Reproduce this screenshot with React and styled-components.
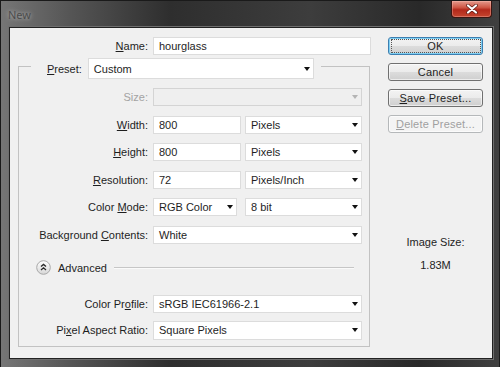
import React from "react";
import styled, {createGlobalStyle} from "styled-components";

const GlobalStyle = createGlobalStyle`
 html, body {
  margin: 0;
  padding: 0;
  background: #1c1c1c;
 }
 body {
  font-family: "Liberation Sans", Arial, sans-serif;
  font-size: 11px;
  color: #1e1e1e;
 }
`;

const Frame = styled.div`
 width: 500px;
 height: 367px;
 box-sizing: border-box;
 display: flex;
 flex-direction: column;
 padding: 0 6px 0 8px;
 border: 1px solid #1a1a1a;
 border-bottom: none;
 background: linear-gradient(
  to right,
  #767676 0%,
  #555 14%,
  #2e2e2e 34%,
  #3d3d3d 62%,
  #292929 84%,
  #404040 100%
 );
 overflow: hidden;
`;

const TitleBar = styled.div`
 height: 26px;
 display: flex;
 justify-content: space-between;
 align-items: flex-start;
 margin-left: -1px;
`;

const Title = styled.span`
 margin-top: 6px;
 font-family: "Noto Sans", "Liberation Sans", sans-serif;
 font-size: 11px;
 color: #4c4c4c;
 text-shadow: 0 0 4px rgba(230, 230, 230, 0.7);
`;

const CloseButton = styled.div`
 width: 41px;
 height: 17px;
 margin-right: 1px;
 box-sizing: border-box;
 display: flex;
 align-items: center;
 justify-content: center;
 border: 1px solid #3b1511;
 border-top: none;
 border-radius: 0 0 4px 4px;
 background: linear-gradient(#e59a8c 0%, #cf5846 40%, #b3291b 55%, #c4452f 100%);
 box-shadow: inset 0 0 0 1px rgba(255, 200, 190, 0.35);
`;

const Client = styled.div`
 flex: 1;
 display: flex;
 margin-bottom: 8px;
 padding: 9px 9px 0 8px;
 background: #f0f0f0;
 border: 1px solid #222;
 box-shadow: 0 0 0 1px #6e6e6e;
`;

const FormColumn = styled.div`
 width: 352px;
 display: flex;
 flex-direction: column;
`;

const Row = styled.div`
 display: grid;
 grid-template-columns: ${({labelWidth}) => labelWidth}px auto;
 column-gap: 5px;
 align-items: center;
`;

const Label = styled.span`
 text-align: right;
 white-space: nowrap;
 color: ${({disabled}) => (disabled ? "#a3a3a3" : "#1e1e1e")};
`;

const Controls = styled.div`
 display: flex;
 gap: ${({gap}) => gap || 4}px;
`;

const TextBox = styled.div`
 width: ${({w}) => w}px;
 height: ${({h}) => h || 18}px;
 box-sizing: border-box;
 display: flex;
 align-items: center;
 padding: 0 3px 0 5px;
 background: ${({disabled}) => (disabled ? "#efefef" : "#fff")};
 border: 1px solid ${({disabled}) => (disabled ? "#d4d4d4" : "#dcdcdc")};
 white-space: nowrap;
`;

const Arrow = styled.span`
 margin-left: auto;
 width: 0;
 height: 0;
 border-left: 3.5px solid transparent;
 border-right: 3.5px solid transparent;
 border-top: 4px solid ${({disabled}) => (disabled ? "#b4b4b4" : "#111")};
`;

const GroupBox = styled.div`
 margin-top: 11px;
 padding-bottom: 6px;
 border: 1px solid #c2c2c2;
`;

const GroupHeader = styled.div`
 width: fit-content;
 display: flex;
 align-items: center;
 gap: 6px;
 margin: -9px 0 0 12px;
 padding: 0 7px 0 16px;
 background: #f0f0f0;
`;

const FieldList = styled.div`
 display: flex;
 flex-direction: column;
 gap: ${({gap}) => gap}px;
 margin-top: ${({top}) => top}px;
`;

const AdvancedRow = styled.div`
 height: 16px;
 display: flex;
 align-items: center;
 margin-top: 16px;
 padding: 0 15px 0 17px;
`;

const AdvancedText = styled.span`
 margin-left: 7px;
 color: #1e1e1e;
`;

const Rule = styled.div`
 flex: 1;
 height: 1px;
 margin-left: 7px;
 background: #c6c6c6;
 box-shadow: 0 1px 0 #fafafa;
`;

const SideColumn = styled.div`
 width: 96px;
 margin-left: 18px;
 display: flex;
 flex-direction: column;
 gap: 8px;
`;

const Button = styled.div`
 height: 18px;
 box-sizing: border-box;
 display: flex;
 align-items: center;
 justify-content: center;
 border-radius: 3px;
 border: 1px solid ${({primary, disabled}) =>
  primary ? "#3c7fb1" : disabled ? "#b5b8ba" : "#707070"};
 background: ${({disabled}) =>
  disabled
   ? "#f4f4f4"
   : "linear-gradient(#f3f3f3 0%, #ebebeb 50%, #dcdcdc 52%, #cfcfcf 100%)"};
 box-shadow: ${({primary}) =>
  primary ? "inset 0 0 0 1px #7fd0f4" : "inset 0 0 0 1px rgba(255,255,255,0.6)"};
 color: ${({disabled}) => (disabled ? "#a0a0a0" : "#1e1e1e")};
 letter-spacing: 0.2px;
`;

const FocusRing = styled.span`
 display: flex;
 align-items: center;
 justify-content: center;
 width: 88px;
 height: 12px;
 border: 1px dotted #555;
`;

const InfoBlock = styled.div`
 margin-top: 90px;
 display: flex;
 flex-direction: column;
 align-items: center;
 line-height: 23px;
 color: #1e1e1e;
`;

const Select = ({w, h, value, disabled}) => (
 <TextBox w={w} h={h} disabled={disabled}>
  <span>{value}</span>
  <Arrow disabled={disabled} />
 </TextBox>
);

const Key = ({children}) => <u>{children}</u>;

const CloseIcon = () => (
 <svg width='12' height='10' viewBox='0 0 12 10'>
  <path d='M2 1.5 L10 8.5 M10 1.5 L2 8.5' stroke='#5a1a12' strokeWidth='3.6' strokeLinecap='round' />
  <path d='M2 1.5 L10 8.5 M10 1.5 L2 8.5' stroke='#fff' strokeWidth='2.2' strokeLinecap='round' />
 </svg>
);

const AdvancedIcon = () => (
 <svg width='15' height='15' viewBox='0 0 15 15'>
  <defs>
   <linearGradient id='advGrad' x1='0' y1='0' x2='0' y2='1'>
    <stop offset='0' stopColor='#ffffff' />
    <stop offset='1' stopColor='#d6d6d6' />
   </linearGradient>
  </defs>
  <circle cx='7.5' cy='7.5' r='6.8' fill='url(#advGrad)' stroke='#a8a8a8' strokeWidth='1' />
  <path d='M5 6.6 L7.5 4.4 L10 6.6 M5 10 L7.5 7.8 L10 10' fill='none' stroke='#2a2a2a' strokeWidth='1.3' />
 </svg>
);

const App = () => {
 return (
  <>
   <GlobalStyle />
   <Frame>
    <TitleBar>
     <Title>New</Title>
     <CloseButton>
      <CloseIcon />
     </CloseButton>
    </TitleBar>

    <Client>
     <FormColumn>
      <Row labelWidth={130}>
       <Label>
        <Key>N</Key>ame:
       </Label>
       <TextBox w={218}>hourglass</TextBox>
      </Row>

      <GroupBox>
       <GroupHeader>
        <Label>
         <Key>P</Key>reset:
        </Label>
        <Select w={226} h={21} value='Custom' />
       </GroupHeader>

       <FieldList gap={9.5} top={9}>
        <Row labelWidth={129}>
         <Label disabled>Size:</Label>
         <Select w={209} value='' disabled />
        </Row>
        <Row labelWidth={129}>
         <Label>
          <Key>W</Key>idth:
         </Label>
         <Controls>
          <TextBox w={88}>800</TextBox>
          <Select w={117} value='Pixels' />
         </Controls>
        </Row>
        <Row labelWidth={129}>
         <Label>
          <Key>H</Key>eight:
         </Label>
         <Controls>
          <TextBox w={88}>800</TextBox>
          <Select w={117} value='Pixels' />
         </Controls>
        </Row>
        <Row labelWidth={129}>
         <Label>
          <Key>R</Key>esolution:
         </Label>
         <Controls>
          <TextBox w={88}>72</TextBox>
          <Select w={117} value='Pixels/Inch' />
         </Controls>
        </Row>
        <Row labelWidth={129}>
         <Label>
          Color <Key>M</Key>ode:
         </Label>
         <Controls gap={8}>
          <Select w={84} value='RGB Color' />
          <Select w={117} value='8 bit' />
         </Controls>
        </Row>
        <Row labelWidth={129}>
         <Label>
          Background <Key>C</Key>ontents:
         </Label>
         <Select w={209} value='White' />
        </Row>
       </FieldList>

       <AdvancedRow>
        <AdvancedIcon />
        <AdvancedText>Advanced</AdvancedText>
        <Rule />
       </AdvancedRow>

       <FieldList gap={8} top={19}>
        <Row labelWidth={129}>
         <Label>
          Color Pr<Key>o</Key>file:
         </Label>
         <Select w={209} value='sRGB IEC61966-2.1' />
        </Row>
        <Row labelWidth={129}>
         <Label>
          Pi<Key>x</Key>el Aspect Ratio:
         </Label>
         <Select w={209} h={19} value='Square Pixels' />
        </Row>
       </FieldList>
      </GroupBox>
     </FormColumn>

     <SideColumn>
      <Button primary>
       <FocusRing>OK</FocusRing>
      </Button>
      <Button>Cancel</Button>
      <Button>
       <span>
        <Key>S</Key>ave Preset...
       </span>
      </Button>
      <Button disabled>
       <span>
        <Key>D</Key>elete Preset...
       </span>
      </Button>
      <InfoBlock>
       <span>Image Size:</span>
       <span>1.83M</span>
      </InfoBlock>
     </SideColumn>
    </Client>
   </Frame>
  </>
 );
};

export default App;
